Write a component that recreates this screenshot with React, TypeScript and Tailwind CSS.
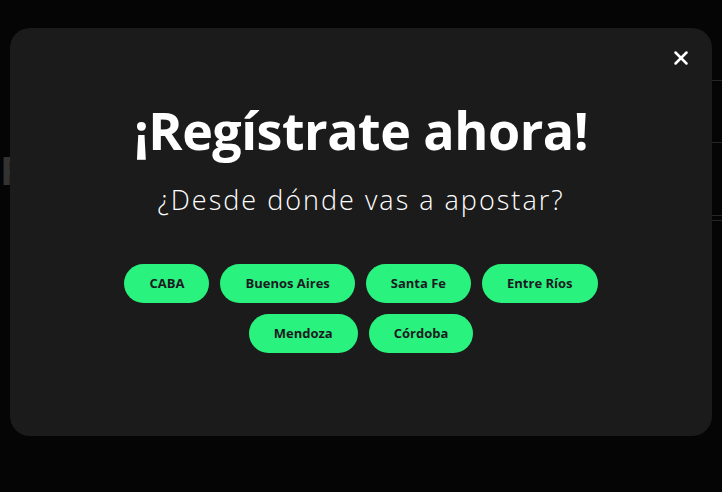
import { X } from "lucide-react";

const regions = ["CABA", "Buenos Aires", "Santa Fe", "Entre Ríos", "Mendoza", "Córdoba"];

export default function App() {
  return (
    <div className="relative h-[492px] w-[722px] overflow-hidden bg-[#050505] font-['Open_Sans',sans-serif]">
      {/* faint page behind the overlay */}
      <div className="absolute inset-0">
        <div className="absolute left-0 top-[150px] text-[40px] font-bold leading-none text-[#333]">P</div>
        <div className="absolute right-0 top-[80px] h-px w-[10px] bg-[#262626]" />
        <div className="absolute right-0 top-[142px] h-px w-[10px] bg-[#262626]" />
        <div className="absolute right-0 top-[215px] h-px w-[10px] bg-[#262626]" />
        <div className="absolute right-0 top-[220px] h-px w-[10px] bg-[#262626]" />
      </div>

      <div className="relative px-[10px] pt-[28px]">
        <div className="relative flex h-[408px] flex-col items-center rounded-[20px] bg-[#1b1b1b] pt-[76px]">
          <button className="absolute right-[20px] top-[19px] text-white">
            <X className="h-[22px] w-[22px]" strokeWidth={2.7} />
          </button>

          <h1 className="text-[52px] font-bold leading-none tracking-[-0.5px] text-white">¡Regístrate ahora!</h1>
          <p className="mt-[30px] text-[27px] font-light leading-none tracking-[2px] text-white">
            ¿Desde dónde vas a apostar?
          </p>

          <div className="mt-[51px] flex max-w-[490px] flex-wrap justify-center gap-[11px]">
            {regions.map((r) => (
              <button
                key={r}
                className="h-[39px] rounded-full bg-[#29f27e] px-[25px] text-[13px] font-bold text-[#1a1a22]"
              >
                {r}
              </button>
            ))}
          </div>
        </div>
      </div>
    </div>
  );
}
